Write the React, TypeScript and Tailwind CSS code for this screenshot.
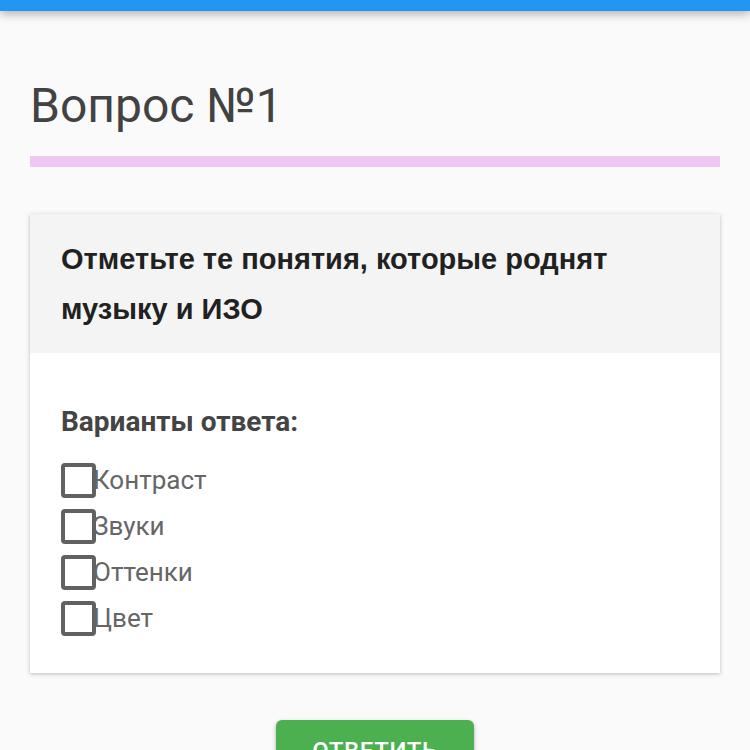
import React from "react";

const roboto = { fontFamily: "Roboto, 'Noto Sans', sans-serif" };
const arial = { fontFamily: "'Liberation Sans', Arial, sans-serif" };

const options = ["Контраст", "Звуки", "Оттенки", "Цвет"];

export default function App() {
  return (
    <div className="min-h-[750px] w-[750px] bg-[#fafafa] overflow-hidden" style={roboto}>
      <div className="h-[11px] bg-[#2196f3] shadow-[0_3px_10px_rgba(0,0,0,0.3)] relative z-10" />
      <div className="px-[30px]">
        <h1 className="pt-[65px] text-[48px] leading-[60px] text-[#424242]">Вопрос №1</h1>
        <div className="mt-[20px] h-[11px] bg-[#eec8f2]" />
        <div className="mt-[47px] bg-white shadow-[0_1px_4px_rgba(0,0,0,0.25)]">
          <div className="bg-[#f4f4f4] px-[31px] pt-[20px] pb-[19px]">
            <div className="text-[29px] leading-[50px] font-bold text-[#212121]" style={arial}>
              Отметьте те понятия, которые роднят музыку и ИЗО
            </div>
          </div>
          <div className="px-[31px] pt-[51px] pb-[37px]">
            <div className="text-[28px] leading-[36px] font-bold text-[#444]">Варианты ответа:</div>
            <div className="mt-[23px] flex flex-col gap-[11px]">
              {options.map((o) => (
                <label key={o} className="flex items-center h-[35px]">
                  <span className="w-[35px] h-[35px] border-[4px] border-[#616161] rounded-[4px] shrink-0" />
                  <span className="text-[26px] text-[#666] -ml-[3px] leading-[35px]">{o}</span>
                </label>
              ))}
            </div>
          </div>
        </div>
        <div className="flex justify-center mt-[47px]">
          <button className="w-[198px] h-[60px] bg-[#4caf50] rounded-[6px] text-white text-[24px] font-medium tracking-wide shadow-[0_2px_4px_rgba(0,0,0,0.3)] pt-[16px] leading-[30px] flex justify-center items-start">
            ОТВЕТИТЬ
          </button>
        </div>
      </div>
    </div>
  );
}
